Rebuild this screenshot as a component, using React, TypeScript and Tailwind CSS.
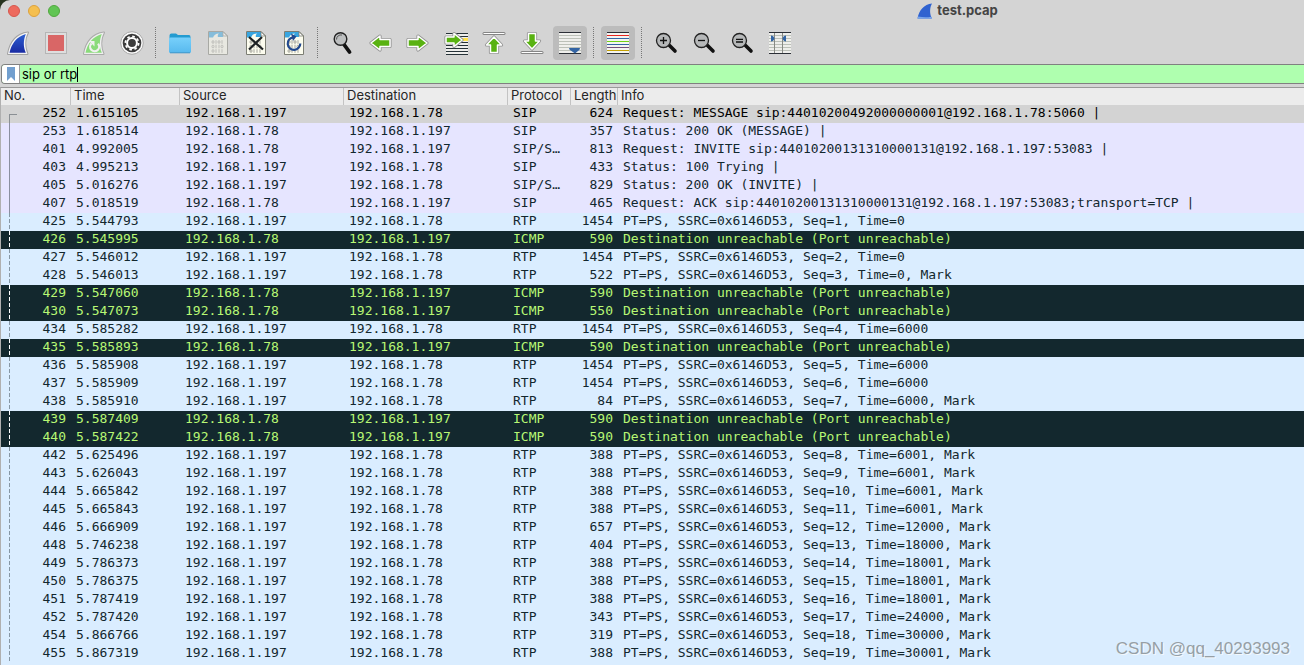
import type { ReactNode } from "react";

type Kind = "selected" | "sip" | "rtp" | "icmp";

type Packet = {
    no: number;
    time: string;
    src: string;
    dst: string;
    protocol: string;
    length: number;
    info: string;
    kind: Kind;
};

const A = "192.168.1.197";
const B = "192.168.1.78";

function sip(no: number, time: string, out: boolean, protocol: string, length: number, info: string, kind: Kind = "sip"): Packet {
    return { no, time, src: out ? A : B, dst: out ? B : A, protocol, length, info, kind };
}

function rtp(no: number, time: string, length: number, seq: number, tail: string): Packet {
    return { no, time, src: A, dst: B, protocol: "RTP", length, info: `PT=PS, SSRC=0x6146D53, Seq=${seq}, Time=${tail}`, kind: "rtp" };
}

function icmp(no: number, time: string, length = 590): Packet {
    return { no, time, src: B, dst: A, protocol: "ICMP", length, info: "Destination unreachable (Port unreachable)", kind: "icmp" };
}

const packets: Packet[] = [
    sip(252, "1.615105", true, "SIP", 624, "Request: MESSAGE sip:44010200492000000001@192.168.1.78:5060 |", "selected"),
    sip(253, "1.618514", false, "SIP", 357, "Status: 200 OK (MESSAGE) |"),
    sip(401, "4.992005", false, "SIP/S…", 813, "Request: INVITE sip:44010200131310000131@192.168.1.197:53083 |"),
    sip(403, "4.995213", true, "SIP", 433, "Status: 100 Trying |"),
    sip(405, "5.016276", true, "SIP/S…", 829, "Status: 200 OK (INVITE) |"),
    sip(407, "5.018519", false, "SIP", 465, "Request: ACK sip:44010200131310000131@192.168.1.197:53083;transport=TCP |"),
    rtp(425, "5.544793", 1454, 1, "0"),
    icmp(426, "5.545995"),
    rtp(427, "5.546012", 1454, 2, "0"),
    rtp(428, "5.546013", 522, 3, "0, Mark"),
    icmp(429, "5.547060"),
    icmp(430, "5.547073", 550),
    rtp(434, "5.585282", 1454, 4, "6000"),
    icmp(435, "5.585893"),
    rtp(436, "5.585908", 1454, 5, "6000"),
    rtp(437, "5.585909", 1454, 6, "6000"),
    rtp(438, "5.585910", 84, 7, "6000, Mark"),
    icmp(439, "5.587409"),
    icmp(440, "5.587422"),
    rtp(442, "5.625496", 388, 8, "6001, Mark"),
    rtp(443, "5.626043", 388, 9, "6001, Mark"),
    rtp(444, "5.665842", 388, 10, "6001, Mark"),
    rtp(445, "5.665843", 388, 11, "6001, Mark"),
    rtp(446, "5.666909", 657, 12, "12000, Mark"),
    rtp(448, "5.746238", 404, 13, "18000, Mark"),
    rtp(449, "5.786373", 388, 14, "18001, Mark"),
    rtp(450, "5.786375", 388, 15, "18001, Mark"),
    rtp(451, "5.787419", 388, 16, "18001, Mark"),
    rtp(452, "5.787420", 343, 17, "24000, Mark"),
    rtp(454, "5.866766", 319, 18, "30000, Mark"),
    rtp(455, "5.867319", 388, 19, "30001, Mark"),
];

const rowStyles: Record<Kind, string> = {
    selected: "bg-[#d3d3d3] text-black",
    sip: "bg-[#e6e5ff] text-[#12272e]",
    rtp: "bg-[#daedff] text-[#12272e]",
    icmp: "bg-[#13282e] text-[#b7f774]",
};

const columns = [
    { name: "No.", width: "w-[70px]" },
    { name: "Time", width: "w-[109px]" },
    { name: "Source", width: "w-[164px]" },
    { name: "Destination", width: "w-[164px]" },
    { name: "Protocol", width: "w-[63px]" },
    { name: "Length", width: "w-[47px]" },
    { name: "Info", width: "w-auto" },
];

function Svg({ children }: { children: ReactNode }) {
    return (
        <svg viewBox="0 0 24 24" className="size-6" aria-hidden="true">
            {children}
        </svg>
    );
}

const FIN = "M2 23C4 11 11 3 22 1.500C18.500 8 18.500 16 21.500 23Z";

function Fin({ fill }: { fill: string }) {
    return (
        <>
            <path d={FIN} fill="none" stroke="#a3a3a3" strokeWidth="2" strokeLinejoin="round" />
            <path d={FIN} fill="#f4f4f4" />
            <path d="M3.500 21.800C5.500 12.500 11 5.500 19.800 3C17.200 9.500 17.200 16 19.800 21.800Z" fill={fill} />
        </>
    );
}

function StartIcon() {
    return (
        <Svg>
            <defs>
                <linearGradient id="fin" x1="0" y1="0" x2="0" y2="1">
                    <stop offset="0" stopColor="#2c5fd2" />
                    <stop offset="1" stopColor="#1a2ba3" />
                </linearGradient>
            </defs>
            <Fin fill="url(#fin)" />
        </Svg>
    );
}

function StopIcon() {
    return (
        <Svg>
            <rect x="1.500" y="1.500" width="21" height="21" fill="#dedede" stroke="#b5b5b5" />
            <rect x="4" y="4" width="16" height="16" fill="#d96666" />
        </Svg>
    );
}

function RestartIcon() {
    return (
        <Svg>
            <g opacity="0.85">
                <Fin fill="#7ddc6c" />
            </g>
            <path d="M9.500 12.500A4.500 4.500 0 1 0 16 12.800" fill="none" stroke="#f0f0f0" strokeWidth="2.200" />
            <path d="M7 10h5.500v5.500z" fill="#f0f0f0" />
        </Svg>
    );
}

function OptionsIcon() {
    return (
        <Svg>
            <circle cx="12" cy="12" r="11.300" fill="#fafafa" stroke="#a8a8a8" />
            <circle cx="12" cy="12" r="9.300" fill="#3b3b3b" />
            <circle cx="12" cy="12" r="6.600" fill="none" stroke="#fff" strokeWidth="1.800" strokeDasharray="2.600 2.584" />
            <circle cx="12" cy="12" r="4.900" fill="none" stroke="#fff" strokeWidth="2" />
        </Svg>
    );
}

function FolderIcon() {
    return (
        <Svg>
            <defs>
                <linearGradient id="folder" x1="0" y1="0" x2="0" y2="1">
                    <stop offset="0" stopColor="#78d0fb" />
                    <stop offset="1" stopColor="#57b9ee" />
                </linearGradient>
            </defs>
            <path d="M1.500 4.500Q1.500 2.500 3.500 2.500H8L10 4H21Q22.500 4 22.500 6V12H1.500Z" fill="#249bd0" />
            <rect x="1" y="6.500" width="22" height="15.500" rx="1.500" fill="url(#folder)" />
            <path d="M2 21.800h20" stroke="#4398c8" />
        </Svg>
    );
}

function Page({ faded, children }: { faded?: boolean; children?: ReactNode }) {
    return (
        <Svg>
            <g opacity={faded ? 0.5 : 1}>
                <path d="M2.500 .5H17L21.500 5V23.500H2.500Z" fill="#fcfcee" />
                <path d="M3 1H17V6H12Q9 4 8.500 6.500H3Z" fill="#38a5e0" />
                <path d="M7 7Q8 2.500 13 2.500Q11 4 12 7Z" fill="#fcfcee" />
                <path d="M17 .5V5H21.500Z" fill="#fff" stroke="#7c7e74" strokeWidth=".8" />
                <g fill="none" stroke="#9c9c94" strokeWidth=".9">
                    <ellipse cx="7" cy="11" rx="1" ry="1.400" />
                    <ellipse cx="13" cy="11" rx="1" ry="1.400" />
                    <ellipse cx="7" cy="15.500" rx="1" ry="1.400" />
                    <ellipse cx="16" cy="15.500" rx="1" ry="1.400" />
                    <ellipse cx="7" cy="20" rx="1" ry="1.400" />
                    <path d="M10 9.200v3.600M16 9.200v3.600M10 13.700v3.600M13 13.700v3.600M10 18.200v3.600M13 18.200v3.600M16 18.200v3.600" />
                </g>
                <path d="M2.500 .5H17L21.500 5V23.500H2.500Z" fill="none" stroke="#7c7e74" />
            </g>
            {children}
        </Svg>
    );
}

function CloseFileIcon() {
    return (
        <Page>
            <path d="M5 6L19 18.500M18 6L5 18.500" stroke="#1e2224" strokeWidth="2.200" />
        </Page>
    );
}

function ReloadIcon() {
    return (
        <Page>
            <path d="M11 6.300A6.300 6.300 0 1 0 18.300 12.500" fill="none" stroke="#22498f" strokeWidth="2.200" />
            <path d="M9 2.500L14.500 5.500L11 10Z" fill="#22498f" />
        </Page>
    );
}

function Arrow({ d }: { d: string }) {
    return (
        <>
            <path d={d} fill="none" stroke="#929292" strokeWidth="3.200" strokeLinejoin="round" />
            <path d={d} fill="#59b212" stroke="#fff" strokeWidth="1.500" strokeLinejoin="round" />
        </>
    );
}

function Bar({ y }: { y: number }) {
    return (
        <>
            <path d={`M2 ${y}h20`} stroke="#858585" strokeWidth="3" strokeLinecap="round" />
            <path d={`M2 ${y}h20`} stroke="#fff" strokeWidth="1.200" strokeLinecap="round" />
        </>
    );
}

function FindIcon() {
    return (
        <Svg>
            <path d="M14 13.500L19.500 21" stroke="#111" strokeWidth="3.800" strokeLinecap="round" />
            <circle cx="10.500" cy="8" r="6.300" fill="#bdbfc0" stroke="#222" strokeWidth="1.400" />
            <path d="M6.500 8.500A4.500 4.500 0 0 1 12 4" fill="none" stroke="#555" strokeWidth="1" />
        </Svg>
    );
}

function GoToIcon() {
    return (
        <Svg>
            <path d="M2 2h22v22H2z" fill="#eeeeec" />
            <path d="M2 2.500h22M2 5.500h22M2 11.500h22M2 14.500h22M2 17.500h22M2 20.500h22M2 23.500h22" stroke="#263238" strokeWidth="1" />
            <path d="M16 8.500h8" stroke="#ffe14a" strokeWidth="3" />
            <Arrow d="M2 6H10V2.500L18 9L10 15.500V12H2Z" />
        </Svg>
    );
}

function Magnifier({ sign }: { sign: string }) {
    return (
        <Svg>
            <path d="M15.500 14.500L21 20" stroke="#111" strokeWidth="3.600" strokeLinecap="round" />
            <circle cx="9.500" cy="9.500" r="7" fill="#b6b8b9" stroke="#222" strokeWidth="1.300" />
            <path d={sign} stroke="#111" strokeWidth="1.300" />
        </Svg>
    );
}

function AutoScrollIcon() {
    return (
        <Svg>
            <path d="M1 1h22v22H1z" fill="#efefec" />
            <path d="M1 4.500h22M1 7.500h22M1 10.500h22M1 13.500h22M1 16.500h22M1 19.500h22" stroke="#bcc0b8" strokeWidth="1" />
            <path d="M1 1.500h22M1 22.500h22" stroke="#2b2f36" strokeWidth="1" />
            <path d="M11 17h11Q22 19 20 20L17 22.500L13.500 20Q11 19 11 17Z" fill="#3465a4" />
        </Svg>
    );
}

const lineColors = ["#2b2f36", "#e8251f", "#3465a4", "#73d216", "#3465a4", "#75507b", "#c4a000", "#2b2f36"];

function ColorizeIcon() {
    return (
        <Svg>
            <path d="M1 1h22v22H1z" fill="#f4f4f2" />
            {lineColors.map((color, i) => (
                <path key={i} d={`M1 ${1.5 + i * 3}h22`} stroke={color} strokeWidth="1" />
            ))}
        </Svg>
    );
}

function ResizeIcon() {
    return (
        <Svg>
            <path d="M1 1h22v22H1z" fill="#efefec" />
            <path d="M1 4.500h22M1 7.500h22M1 10.500h22M1 13.500h22M1 16.500h22M1 19.500h22" stroke="#bcc0b8" strokeWidth="1" />
            <path d="M6.500 1v22M14.500 1v22" stroke="#888a85" strokeWidth="1" />
            <path d="M1 1.500h22M1 22.500h22" stroke="#2b2f36" strokeWidth="1" />
            <path d="M3 4.500Q5.500 4.500 6.500 7.500Q5.500 10.500 3 10.500ZM18 4.500Q15.500 4.500 14.500 7.500Q15.500 10.500 18 10.500Z" fill="#3465a4" />
        </Svg>
    );
}

type Tool = { label: string; icon: ReactNode; active?: boolean };

const toolGroups: Tool[][] = [
    [
        { label: "Start capture", icon: <StartIcon /> },
        { label: "Stop capture", icon: <StopIcon /> },
        { label: "Restart capture", icon: <RestartIcon /> },
        { label: "Capture options", icon: <OptionsIcon /> },
    ],
    [
        { label: "Open file", icon: <FolderIcon /> },
        { label: "Save file", icon: <Page faded /> },
        { label: "Close file", icon: <CloseFileIcon /> },
        { label: "Reload file", icon: <ReloadIcon /> },
    ],
    [
        { label: "Find packet", icon: <FindIcon /> },
        { label: "Previous packet", icon: <Svg><Arrow d="M22 8.500H12V5L3 12L12 19V15.500H22Z" /></Svg> },
        { label: "Next packet", icon: <Svg><Arrow d="M2 8.500H12V5L21 12L12 19V15.500H2Z" /></Svg> },
        { label: "Go to packet", icon: <GoToIcon /> },
        { label: "First packet", icon: <Svg><Bar y={2.5} /><Arrow d="M8.500 21.500V14H4.500L12 6L19.500 14H15.500V21.500Z" /></Svg> },
        { label: "Last packet", icon: <Svg><Bar y={21.5} /><Arrow d="M8.500 2.500V10H4.500L12 18L19.500 10H15.500V2.500Z" /></Svg> },
        { label: "Auto scroll", icon: <AutoScrollIcon />, active: true },
    ],
    [{ label: "Colorize", icon: <ColorizeIcon />, active: true }],
    [
        { label: "Zoom in", icon: <Magnifier sign="M6 9.500h7M9.500 6v7" /> },
        { label: "Zoom out", icon: <Magnifier sign="M6 9.500h7" /> },
        { label: "Normal size", icon: <Magnifier sign="M6 8.300h7M6 11h7" /> },
        { label: "Resize columns", icon: <ResizeIcon /> },
    ],
];

function TitleBar() {
    return (
        <header className="flex h-[22px] items-center pl-2">
            <div className="flex gap-2">
                <span className="size-3 rounded-full border border-[#d6574d] bg-[#ed6a5e]" />
                <span className="size-3 rounded-full border border-[#dca13c] bg-[#f5bf4f]" />
                <span className="size-3 rounded-full border border-[#51a73e] bg-[#61c554]" />
            </div>
            <div className="grow-14" />
            <svg viewBox="0 0 16 16" className="mr-1 size-4" aria-hidden="true">
                <path d="M.5 15.500C2 7 7 1.500 15 .5C12.500 5 12.500 11 15 15.500Z" fill="#2f62d0" />
                <path d="M.5 15.500L1 13.500Q8 15 14.300 13.800L15 15.500Z" fill="#78a6ec" />
            </svg>
            <h1 className="text-[13px] font-bold text-[#444]">test.pcap</h1>
            <div className="grow-5" />
        </header>
    );
}

function Toolbar() {
    return (
        <div className="flex h-[42px] items-center gap-1 pl-px">
            {toolGroups.map((group, g) => (
                <div key={g} className="flex items-center gap-1">
                    {g > 0 && (
                        <span className="mr-[3px] ml-[2px] h-8 w-px bg-[repeating-linear-gradient(to_bottom,#777_0_1px,transparent_1px_2px)]" />
                    )}
                    {group.map((tool) => (
                        <button
                            key={tool.label}
                            type="button"
                            aria-label={tool.label}
                            className={`flex size-[34px] items-center justify-center rounded-sm ${tool.active ? "bg-[#bcbcbc]" : ""}`}
                        >
                            {tool.icon}
                        </button>
                    ))}
                </div>
            ))}
        </div>
    );
}

function FilterBar() {
    return (
        <div className="mb-[3px] ml-px flex h-5 overflow-hidden rounded-l-sm border border-r-0 border-[#808080] bg-[#afffaf]">
            <button type="button" aria-label="Filter bookmarks" className="flex w-[18px] shrink-0 items-center justify-center border-r border-[#9a9a9a] bg-white">
                <svg viewBox="0 0 8 14" className="h-[14px] w-2" aria-hidden="true">
                    <path d="M0 0h8v14L4 10L0 14Z" fill="#729fcf" />
                </svg>
            </button>
            <label className="flex grow items-center pl-[2px]">
                <input
                    type="text"
                    aria-label="Display filter"
                    defaultValue="sip or rtp"
                    className="field-sizing-content bg-transparent text-[13px] leading-[18px] text-black caret-transparent outline-none"
                />
                <span className="h-[15px] w-px bg-black" />
            </label>
        </div>
    );
}

// Thread marker drawn in the gutter of the "No." column
function Gutter({ kind }: { kind: Kind }) {
    if (kind === "selected") return <span className="mt-[9px] ml-2 h-[9px] w-2 border-t border-l border-[#8a8f94]" />;
    if (kind === "sip") return <span className="ml-2 w-px bg-[#8a8fa0]" />;
    if (kind === "icmp") return <span className="ml-2 w-px bg-[repeating-linear-gradient(to_bottom,#fff_0_4px,transparent_4px_6px)]" />;
    return <span className="ml-2 w-px bg-[repeating-linear-gradient(to_bottom,#8697a5_0_4px,transparent_4px_6px)]" />;
}

function PacketTable() {
    return (
        <div className="grow border-t border-l border-t-[#999] border-l-[#b0b0b0] bg-[#daedff]">
            <table className="w-full table-fixed border-separate border-spacing-0">
                <thead>
                    <tr className="h-[17px] bg-[#ececec]">
                        {columns.map((col) => (
                            <th
                                key={col.name}
                                scope="col"
                                className={`${col.width} overflow-hidden p-0 pl-[3px] text-left align-top text-[13px] leading-[15px] font-normal whitespace-nowrap text-[#262626] ${col.name === "Info" ? "" : "border-r border-[#c3c3c3]"}`}
                            >
                                {col.name}
                            </th>
                        ))}
                    </tr>
                </thead>
                <tbody className="font-['DejaVu_Sans_Mono',monospace] text-[13px] leading-4 whitespace-pre">
                    {packets.map((p) => (
                        <tr key={p.no} className={`align-top ${rowStyles[p.kind]}`}>
                            <td className="p-0">
                                <div className="flex h-[18px] justify-between pr-[5px]">
                                    <Gutter kind={p.kind} />
                                    <span>{p.no}</span>
                                </div>
                            </td>
                            <td className="p-0 pl-[5px]">{p.time}</td>
                            <td className="p-0 pl-[5px]">{p.src}</td>
                            <td className="p-0 pl-[5px]">{p.dst}</td>
                            <td className="p-0 pl-[5px]">{p.protocol}</td>
                            <td className="p-0 pr-[5px] text-right">{p.length}</td>
                            <td className="overflow-hidden p-0 pl-[5px]">{p.info}</td>
                        </tr>
                    ))}
                </tbody>
            </table>
        </div>
    );
}

export default function App() {
    return (
        <div className="bg-[#26331f]">
            <main className="relative flex min-h-screen flex-col overflow-hidden rounded-tl-[10px] bg-[#d4d4d4] font-[Inter,sans-serif]">
                <TitleBar />
                <Toolbar />
                <FilterBar />
                <PacketTable />
                <p className="absolute right-[14px] bottom-[6px] font-['Liberation_Sans',sans-serif] text-[17px] leading-5 text-[#969fa6] [text-shadow:1px_1px_0_#f4f8fb]">
                    CSDN @qq_40293993
                </p>
            </main>
        </div>
    );
}
